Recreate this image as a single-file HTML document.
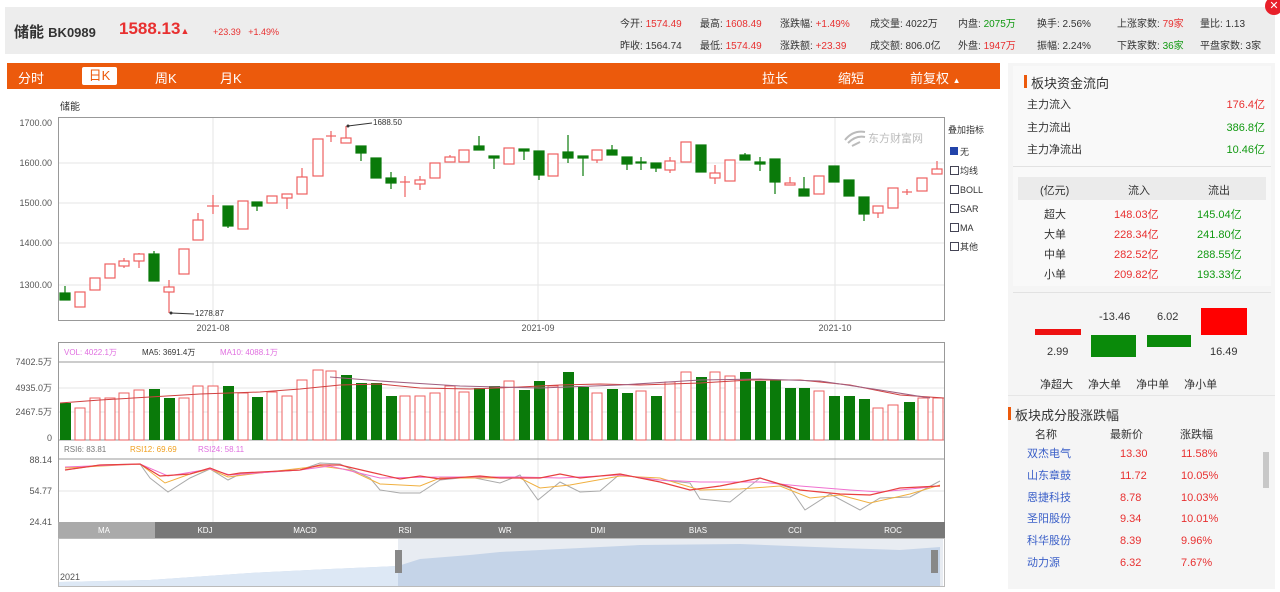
<!DOCTYPE html>
<html><head><meta charset="utf-8"><style>
*{margin:0;padding:0;box-sizing:border-box}
body{width:1280px;height:592px;background:#fff;font-family:"Liberation Sans","Noto Sans CJK SC",sans-serif;position:relative;overflow:hidden;color:#333}
.a{position:absolute;white-space:nowrap}
.r{color:#e83030}.g{color:#119911}
.s{font-size:10px}
</style></head><body>
<div class="a" style="left:5px;top:7px;width:1270px;height:47px;background:#ededed"></div>
<div class="a" style="left:1265px;top:-3px;width:18px;height:18px;border-radius:50%;background:#e8202a;color:#fff;font-size:11px;line-height:18px;text-align:center">✕</div>
<div class="a" style="left:14px;top:21px;font-size:15px;font-weight:bold;color:#333">储能 <span style="font-size:13px">BK0989</span></div>
<div class="a r" style="left:119px;top:19px;font-size:17px;font-weight:bold">1588.13<span style="font-size:9px">▲</span></div>
<div class="a r" style="left:213px;top:27px;font-size:9px">+23.39 &nbsp;&nbsp;+1.49%</div>
<div class="a s" style="left:620px;top:15px;word-spacing:0">今开: <span class="r">1574.49</span></div>
<div class="a s" style="left:700px;top:15px">最高: <span class="r">1608.49</span></div>
<div class="a s" style="left:780px;top:15px">涨跌幅: <span class="r">+1.49%</span></div>
<div class="a s" style="left:870px;top:15px">成交量: 4022万</div>
<div class="a s" style="left:958px;top:15px">内盘: <span class="g">2075万</span></div>
<div class="a s" style="left:1037px;top:15px">换手: 2.56%</div>
<div class="a s" style="left:1117px;top:15px">上涨家数: <span class="r">79家</span></div>
<div class="a s" style="left:1200px;top:15px">量比: 1.13</div>
<div class="a s" style="left:620px;top:37px">昨收: 1564.74</div>
<div class="a s" style="left:700px;top:37px">最低: <span class="r">1574.49</span></div>
<div class="a s" style="left:780px;top:37px">涨跌额: <span class="r">+23.39</span></div>
<div class="a s" style="left:870px;top:37px">成交额: 806.0亿</div>
<div class="a s" style="left:958px;top:37px">外盘: <span class="r">1947万</span></div>
<div class="a s" style="left:1037px;top:37px">振幅: 2.24%</div>
<div class="a s" style="left:1117px;top:37px">下跌家数: <span class="g">36家</span></div>
<div class="a s" style="left:1200px;top:37px">平盘家数: 3家</div>

<div class="a" style="left:7px;top:63px;width:993px;height:26px;background:#ec5a0c"></div>
<div class="a" style="left:18px;top:68px;color:#fff;font-size:13px">分时</div>
<div class="a" style="left:82px;top:67px;width:35px;height:18px;background:#fff;border-radius:2px;color:#ec5a0c;font-size:13px;text-align:center;line-height:18px">日K</div>
<div class="a" style="left:155px;top:68px;color:#fff;font-size:13px">周K</div>
<div class="a" style="left:220px;top:68px;color:#fff;font-size:13px">月K</div>
<div class="a" style="left:762px;top:68px;color:#fff;font-size:13px">拉长</div>
<div class="a" style="left:838px;top:68px;color:#fff;font-size:13px">缩短</div>
<div class="a" style="left:910px;top:68px;color:#fff;font-size:13px">前复权 <span style="font-size:8px">▲</span></div>

<svg class="a" style="left:0;top:90px" width="1005" height="502" viewBox="0 90 1005 502" font-family="Liberation Sans,Noto Sans CJK SC,sans-serif">
<text x="60" y="110" font-size="10" fill="#333">储能</text>
<g font-size="9" fill="#555" text-anchor="end">
<text x="52" y="126">1700.00</text><text x="52" y="166">1600.00</text><text x="52" y="206">1500.00</text><text x="52" y="246">1400.00</text><text x="52" y="288">1300.00</text>
<text x="52" y="365">7402.5万</text><text x="52" y="391">4935.0万</text><text x="52" y="415">2467.5万</text><text x="52" y="441">0</text>
<text x="52" y="463">88.14</text><text x="52" y="494">54.77</text><text x="52" y="525">24.41</text>
</g>
<g stroke="#e6e6e6" stroke-width="1">
<line x1="58" y1="163" x2="944" y2="163"/><line x1="58" y1="203" x2="944" y2="203"/><line x1="58" y1="243" x2="944" y2="243"/><line x1="58" y1="285" x2="944" y2="285"/>
<line x1="213" y1="117" x2="213" y2="320"/><line x1="538" y1="117" x2="538" y2="320"/><line x1="835" y1="117" x2="835" y2="320"/>
<line x1="58" y1="388" x2="944" y2="388"/><line x1="58" y1="412" x2="944" y2="412"/><line x1="58" y1="491" x2="944" y2="491"/>
<line x1="213" y1="362" x2="213" y2="522"/><line x1="538" y1="362" x2="538" y2="522"/><line x1="835" y1="362" x2="835" y2="522"/>
</g>
<rect x="58.5" y="117.5" width="886" height="203" fill="none" stroke="#999"/>
<rect x="58.5" y="342.5" width="886" height="180" fill="none" stroke="#999"/>
<line x1="58" y1="362" x2="944" y2="362" stroke="#999"/>
<line x1="58" y1="440" x2="944" y2="440" stroke="#999"/>
<line x1="58" y1="459" x2="944" y2="459" stroke="#999"/>
<g font-size="9" fill="#555" text-anchor="middle"><text x="213" y="331">2021-08</text><text x="538" y="331">2021-09</text><text x="835" y="331">2021-10</text></g>
<!-- watermark -->
<g fill="#bbb" font-size="11"><path d="M845 140 q8-10 20-8 M848 143 q8-8 17-6 M852 146 l8-4" stroke="#bbb" fill="none" stroke-width="2"/><text x="868" y="142">东方财富网</text></g>
<g font-size="9" fill="#333"><text x="948" y="133">叠加指标</text>
<rect x="950" y="147" width="8" height="8" fill="#2244aa"/><text x="960" y="155">无</text>
<rect x="950.5" y="166.5" width="8" height="8" fill="none" stroke="#445"/><text x="960" y="174">均线</text>
<rect x="950.5" y="185.5" width="8" height="8" fill="none" stroke="#445"/><text x="960" y="193">BOLL</text>
<rect x="950.5" y="204.5" width="8" height="8" fill="none" stroke="#445"/><text x="960" y="212">SAR</text>
<rect x="950.5" y="223.5" width="8" height="8" fill="none" stroke="#445"/><text x="960" y="231">MA</text>
<rect x="950.5" y="242.5" width="8" height="8" fill="none" stroke="#445"/><text x="960" y="250">其他</text></g>
<!-- candles -->
<g stroke-width="1.2">
<g stroke="#0a7a0a" fill="#0a7a0a">
<line x1="65" y1="286" x2="65" y2="300"/><rect x="60" y="293" width="10" height="7"/>
<line x1="154" y1="251" x2="154" y2="281"/><rect x="149" y="254" width="10" height="27"/>
<line x1="228" y1="206" x2="228" y2="228"/><rect x="223" y="206" width="10" height="20"/>
<line x1="257" y1="202" x2="257" y2="211"/><rect x="252" y="202" width="10" height="4"/>
<line x1="361" y1="146" x2="361" y2="161"/><rect x="356" y="146" width="10" height="7"/>
<rect x="371" y="158" width="10" height="20"/>
<line x1="391" y1="172" x2="391" y2="189"/><rect x="386" y="178" width="10" height="5"/>
<line x1="479" y1="136" x2="479" y2="150"/><rect x="474" y="146" width="10" height="4"/>
<line x1="494" y1="157" x2="494" y2="169"/><rect x="489" y="156" width="10" height="2"/>
<line x1="524" y1="150" x2="524" y2="160"/><rect x="519" y="149" width="10" height="2"/>
<line x1="539" y1="151" x2="539" y2="180"/><rect x="534" y="151" width="10" height="24"/>
<line x1="568" y1="135" x2="568" y2="163"/><rect x="563" y="152" width="10" height="6"/>
<line x1="583" y1="157" x2="583" y2="176"/><rect x="578" y="156" width="10" height="2"/>
<line x1="612" y1="145" x2="612" y2="155"/><rect x="607" y="150" width="10" height="5"/>
<line x1="627" y1="157" x2="627" y2="170"/><rect x="622" y="157" width="10" height="7"/>
<line x1="641" y1="157" x2="641" y2="170"/><rect x="636" y="162" width="10" height="1"/>
<line x1="656" y1="163" x2="656" y2="172"/><rect x="651" y="163" width="10" height="5"/>
<rect x="696" y="145" width="10" height="27"/>
<line x1="745" y1="153" x2="745" y2="160"/><rect x="740" y="155" width="10" height="5"/>
<line x1="760" y1="157" x2="760" y2="171"/><rect x="755" y="162" width="10" height="2"/>
<line x1="775" y1="159" x2="775" y2="194"/><rect x="770" y="159" width="10" height="23"/>
<line x1="804" y1="177" x2="804" y2="196"/><rect x="799" y="189" width="10" height="7"/>
<rect x="829" y="166" width="10" height="16"/>
<rect x="844" y="180" width="10" height="16"/>
<line x1="864" y1="197" x2="864" y2="221"/><rect x="859" y="197" width="10" height="17"/>
</g>
<g stroke="#ee6060" fill="#fff">
<rect x="75" y="292" width="10" height="15"/>
<rect x="90" y="278" width="10" height="12"/>
<rect x="105" y="264" width="10" height="14"/>
<line x1="124" y1="258" x2="124" y2="268"/><rect x="119" y="261" width="10" height="5"/>
<line x1="139" y1="253" x2="139" y2="268"/><rect x="134" y="254" width="10" height="7"/>
<line x1="169" y1="280" x2="169" y2="313"/><rect x="164" y="287" width="10" height="5"/>
<rect x="179" y="249" width="10" height="25"/>
<line x1="198" y1="213" x2="198" y2="220"/><rect x="193" y="220" width="10" height="20"/>
<line x1="213" y1="195" x2="213" y2="214"/><line x1="207" y1="206" x2="219" y2="206"/>
<rect x="238" y="201" width="10" height="28"/>
<rect x="267" y="196" width="10" height="7"/>
<line x1="287" y1="198" x2="287" y2="209"/><rect x="282" y="194" width="10" height="4"/>
<line x1="302" y1="168" x2="302" y2="177"/><rect x="297" y="177" width="10" height="17"/>
<rect x="313" y="139" width="10" height="37"/>
<line x1="331" y1="131" x2="331" y2="142"/><line x1="326" y1="136" x2="336" y2="136"/>
<line x1="346" y1="126" x2="346" y2="138"/><rect x="341" y="138" width="10" height="5"/>
<line x1="405" y1="176" x2="405" y2="197"/><line x1="400" y1="182" x2="410" y2="182"/>
<line x1="420" y1="176" x2="420" y2="190"/><rect x="415" y="180" width="10" height="4"/>
<rect x="430" y="163" width="10" height="15"/>
<line x1="450" y1="155" x2="450" y2="157"/><rect x="445" y="157" width="10" height="5"/>
<rect x="459" y="150" width="10" height="12"/>
<rect x="504" y="148" width="10" height="16"/>
<rect x="548" y="154" width="10" height="22"/>
<line x1="597" y1="160" x2="597" y2="163"/><rect x="592" y="150" width="10" height="10"/>
<line x1="670" y1="157" x2="670" y2="173"/><rect x="665" y="161" width="10" height="9"/>
<rect x="681" y="142" width="10" height="20"/>
<line x1="715" y1="165" x2="715" y2="184"/><rect x="710" y="173" width="10" height="5"/>
<rect x="725" y="160" width="10" height="21"/>
<line x1="790" y1="177" x2="790" y2="183"/><rect x="785" y="183" width="10" height="2"/>
<rect x="814" y="176" width="10" height="18"/>
<line x1="878" y1="213" x2="878" y2="218"/><rect x="873" y="206" width="10" height="7"/>
<rect x="888" y="188" width="10" height="20"/>
<line x1="902" y1="192" x2="912" y2="192"/><line x1="907" y1="189" x2="907" y2="195"/>
<rect x="917" y="178" width="10" height="13"/>
<line x1="937" y1="161" x2="937" y2="169"/><rect x="932" y="169" width="10" height="5"/>
</g></g>
<g font-size="8" fill="#333"><line x1="348" y1="126" x2="372" y2="123" stroke="#333"/><circle cx="348" cy="126" r="1.5"/><text x="373" y="125">1688.50</text>
<line x1="171" y1="313" x2="194" y2="314" stroke="#333"/><circle cx="171" cy="313" r="1.5"/><text x="195" y="316">1278.87</text></g>
<!-- volume -->
<g font-size="8"><text x="64" y="355" fill="#e070e0">VOL: 4022.1万</text><text x="142" y="355" fill="#333">MA5: 3691.4万</text><text x="220" y="355" fill="#e070e0">MA10: 4088.1万</text>
<text x="64" y="452" fill="#777">RSI6: 83.81</text><text x="130" y="452" fill="#f0a020">RSI12: 69.69</text><text x="198" y="452" fill="#e070e0">RSI24: 58.11</text></g>
<g fill="#0a7a0a">
<rect x="60" y="403" width="11" height="37"/><rect x="149" y="389" width="11" height="51"/><rect x="164" y="398" width="11" height="42"/><rect x="223" y="386" width="11" height="54"/><rect x="252" y="397" width="11" height="43"/>
<rect x="341" y="375" width="11" height="65"/><rect x="356" y="383" width="11" height="57"/><rect x="371" y="383" width="11" height="57"/><rect x="386" y="396" width="11" height="44"/>
<rect x="474" y="388" width="11" height="52"/><rect x="489" y="386" width="11" height="54"/><rect x="519" y="390" width="11" height="50"/><rect x="534" y="381" width="11" height="59"/>
<rect x="563" y="372" width="11" height="68"/><rect x="578" y="387" width="11" height="53"/><rect x="607" y="389" width="11" height="51"/><rect x="622" y="393" width="11" height="47"/><rect x="651" y="396" width="11" height="44"/>
<rect x="696" y="377" width="11" height="63"/><rect x="740" y="372" width="11" height="68"/><rect x="755" y="381" width="11" height="59"/><rect x="770" y="380" width="11" height="60"/><rect x="785" y="388" width="11" height="52"/><rect x="799" y="388" width="11" height="52"/>
<rect x="829" y="396" width="11" height="44"/><rect x="844" y="396" width="11" height="44"/><rect x="859" y="399" width="11" height="41"/><rect x="904" y="402" width="11" height="38"/>
</g>
<g fill="#fff" stroke="#ee6060">
<rect x="75" y="408" width="10" height="32"/><rect x="90" y="398" width="10" height="42"/><rect x="105" y="398" width="10" height="42"/><rect x="119" y="393" width="10" height="47"/><rect x="134" y="390" width="10" height="50"/>
<rect x="179" y="398" width="10" height="42"/><rect x="193" y="386" width="10" height="54"/><rect x="208" y="386" width="10" height="54"/><rect x="238" y="393" width="10" height="47"/>
<rect x="267" y="392" width="10" height="48"/><rect x="282" y="396" width="10" height="44"/><rect x="297" y="380" width="10" height="60"/><rect x="313" y="370" width="10" height="70"/><rect x="326" y="371" width="10" height="69"/>
<rect x="400" y="396" width="10" height="44"/><rect x="415" y="396" width="10" height="44"/><rect x="430" y="393" width="10" height="47"/><rect x="445" y="386" width="10" height="54"/><rect x="459" y="392" width="10" height="48"/>
<rect x="504" y="381" width="10" height="59"/><rect x="548" y="386" width="10" height="54"/><rect x="592" y="393" width="10" height="47"/><rect x="636" y="391" width="10" height="49"/>
<rect x="665" y="382" width="10" height="58"/><rect x="681" y="372" width="10" height="68"/><rect x="710" y="372" width="10" height="68"/><rect x="725" y="376" width="10" height="64"/>
<rect x="814" y="391" width="10" height="49"/><rect x="873" y="408" width="10" height="32"/><rect x="888" y="405" width="10" height="35"/><rect x="918" y="398" width="10" height="42"/><rect x="933" y="398" width="10" height="42"/>
</g>
<polyline fill="none" stroke="#d04040" stroke-width="1" points="60,403 100,400 150,397 200,394 260,392 300,389 340,385 380,384 420,388 470,389 520,387 560,385 600,384 640,385 700,383 750,380 800,380 850,385 900,395 944,398"/>
<polyline fill="none" stroke="#a06080" stroke-width="1" points="330,377 380,381 460,386 540,388 620,385 700,380 760,379 820,381 880,390 930,398"/>
<!-- rsi -->
<polyline fill="none" stroke="#aaa" stroke-width="1" points="65,470 100,465 140,464 150,478 168,492 190,478 210,469 228,480 240,474 300,470 320,463 340,464 370,478 380,490 400,493 420,493 440,480 470,477 500,483 520,475 538,500 560,482 580,492 600,491 620,474 640,478 660,480 690,483 700,499 730,502 760,478 790,488 805,510 830,494 860,510 880,498 910,497 940,481"/>
<polyline fill="none" stroke="#f0b040" stroke-width="1" points="65,468 140,464 165,483 190,474 210,469 228,477 260,473 320,466 350,470 380,484 420,486 440,478 480,478 520,478 540,488 570,485 620,476 660,478 700,490 740,489 780,486 810,498 840,495 870,503 910,494 940,485"/>
<polyline fill="none" stroke="#f070d0" stroke-width="1" points="65,467 140,464 168,476 210,469 230,475 300,470 330,466 380,478 440,477 520,477 560,478 620,475 660,480 700,482 760,482 800,486 850,490 880,492 930,487"/>
<polyline fill="none" stroke="#e84040" stroke-width="1.2" points="65,470 100,465 140,464 160,476 190,474 210,468 228,475 240,473 300,470 320,465 340,465 370,472 400,479 420,476 440,479 480,476 500,478 540,478 560,474 580,478 620,474 660,482 690,490 720,486 760,478 800,490 840,494 870,495 900,488 940,486"/>
<!-- tab bar -->
<rect x="58" y="522" width="887" height="16" fill="#787878"/><rect x="58" y="522" width="97" height="16" fill="#aaa"/>
<g font-size="8" fill="#fff" text-anchor="middle"><text x="104" y="533">MA</text><text x="205" y="533">KDJ</text><text x="305" y="533">MACD</text><text x="405" y="533">RSI</text><text x="505" y="533">WR</text><text x="598" y="533">DMI</text><text x="698" y="533">BIAS</text><text x="795" y="533">CCI</text><text x="893" y="533">ROC</text></g>
<!-- navigator -->
<rect x="58" y="538" width="887" height="48" fill="#fff"/>
<rect x="398" y="538" width="545" height="48" fill="#e8ecf2"/>
<path d="M58,586 L58,582 L150,580 L250,573 L330,569 L398,566 L420,559 L470,555 L500,552 L560,549 L640,545 L740,544 L840,548 L900,550 L940,547 L940,586 Z" fill="#c5d4e8"/>
<path d="M58,586 L58,582 L150,580 L250,573 L330,569 L398,566 L398,586 Z" fill="#dde8f5"/>
<rect x="395" y="550" width="7" height="23" fill="#888"/><rect x="931" y="550" width="7" height="23" fill="#888"/>
<text x="60" y="580" font-size="9" fill="#555">2021</text>
<rect x="58.5" y="538.5" width="886" height="48" fill="none" stroke="#bbb"/>
</svg>

<!-- right panel -->
<div class="a" style="left:1008px;top:63px;width:267px;height:526px;background:#f5f5f5"></div>
<div class="a" style="left:1013px;top:66px;width:258px;height:220px;background:#f9f9f9"></div>
<div class="a" style="left:1024px;top:75px;width:3px;height:13px;background:#ec5a0c"></div>
<div class="a" style="left:1031px;top:73px;font-size:13px">板块资金流向</div>
<div class="a" style="left:1027px;top:96px;font-size:11px">主力流入</div><div class="a r" style="right:15px;top:96px;font-size:11px">176.4亿</div>
<div class="a" style="left:1027px;top:119px;font-size:11px">主力流出</div><div class="a g" style="right:15px;top:119px;font-size:11px">386.8亿</div>
<div class="a" style="left:1027px;top:141px;font-size:11px">主力净流出</div><div class="a g" style="right:15px;top:141px;font-size:11px">10.46亿</div>
<div class="a" style="left:1013px;top:166px;width:258px;height:1px;background:#e2e2e2"></div>
<div class="a" style="left:1018px;top:177px;width:248px;height:23px;background:#ebebeb"></div>
<div class="a" style="left:1040px;top:182px;font-size:11px">(亿元)</div><div class="a" style="left:1128px;top:182px;font-size:11px">流入</div><div class="a" style="left:1208px;top:182px;font-size:11px">流出</div>
<div class="a" style="left:1044px;top:205px;font-size:11px;line-height:20px">超大<br>大单<br>中单<br>小单</div>
<div class="a r" style="left:1114px;top:205px;font-size:11px;line-height:20px">148.03亿<br>228.34亿<br>282.52亿<br>209.82亿</div>
<div class="a g" style="left:1197px;top:205px;font-size:11px;line-height:20px">145.04亿<br>241.80亿<br>288.55亿<br>193.33亿</div>
<div class="a" style="left:1013px;top:292px;width:258px;height:1px;background:#e2e2e2"></div>
<div class="a" style="left:1035px;top:329px;width:46px;height:6px;background:#ee1111"></div>
<div class="a" style="left:1091px;top:335px;width:45px;height:22px;background:#0a8a0a"></div>
<div class="a" style="left:1147px;top:335px;width:44px;height:12px;background:#0a8a0a"></div>
<div class="a" style="left:1201px;top:308px;width:46px;height:27px;background:#ff0000"></div>
<div class="a" style="left:1047px;top:346px;font-size:11px">2.99</div>
<div class="a" style="left:1099px;top:311px;font-size:11px">-13.46</div>
<div class="a" style="left:1157px;top:311px;font-size:11px">6.02</div>
<div class="a" style="left:1210px;top:346px;font-size:11px">16.49</div>
<div class="a" style="left:1040px;top:376px;font-size:11px;word-spacing:12px">净超大 净大单 净中单 净小单</div>
<div class="a" style="left:1008px;top:395px;width:267px;height:1px;background:#e6e6e6"></div>
<div class="a" style="left:1008px;top:407px;width:3px;height:13px;background:#ec5a0c"></div>
<div class="a" style="left:1015px;top:405px;font-size:13px">板块成分股涨跌幅</div>
<div class="a" style="left:1035px;top:426px;font-size:11px">名称</div><div class="a" style="left:1110px;top:426px;font-size:11px">最新价</div><div class="a" style="left:1180px;top:426px;font-size:11px">涨跌幅</div>
<div class="a" style="left:1027px;top:444px;font-size:11px;line-height:21.8px;color:#3a5fc8">双杰电气<br>山东章鼓<br>恩捷科技<br>圣阳股份<br>科华股份<br>动力源</div>
<div class="a r" style="left:1120px;top:444px;font-size:11px;line-height:21.8px">13.30<br>11.72<br>8.78<br>9.34<br>8.39<br>6.32</div>
<div class="a r" style="left:1181px;top:444px;font-size:11px;line-height:21.8px">11.58%<br>10.05%<br>10.03%<br>10.01%<br>9.96%<br>7.67%</div>
<div class="a" style="left:1263px;top:452px;width:6px;height:36px;background:#c8c8c8"></div>
</body></html>
